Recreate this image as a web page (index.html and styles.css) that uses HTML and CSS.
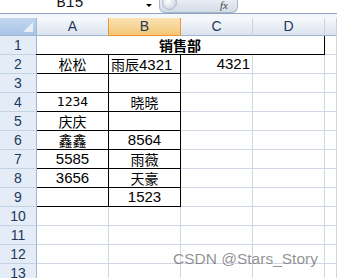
FILE: index.html
```html
<!DOCTYPE html>
<html>
<head>
<meta charset="utf-8">
<link rel="stylesheet" href="styles.css">
</head>
<body>
<div class="app">
  <div class="formula-bar">
    <div class="namebox">B15</div>
    <div class="dropdown"></div>
    <div class="pill">
      <span class="knob"></span>
      <span class="fx">fx</span>
    </div>
    <div class="formula-input"></div>
  </div>
  <div class="band"></div>
  <div class="sheet">
    <div class="corner"><span class="tri"></span></div>
    <div class="colh">A</div>
    <div class="colh sel">B</div>
    <div class="colh">C</div>
    <div class="colh">D</div>
    <div class="colh"></div>

    <div class="rowh">1</div>
    <div class="cell title bx">销售部</div>
    <div class="cell"></div>

    <div class="rowh">2</div>
    <div class="cell c bx">松松</div>
    <div class="cell l bx">雨辰<span class="num">4321</span></div>
    <div class="cell r num">4321</div>
    <div class="cell"></div>
    <div class="cell"></div>

    <div class="rowh">3</div>
    <div class="cell bx"></div>
    <div class="cell bx"></div>
    <div class="cell"></div>
    <div class="cell"></div>
    <div class="cell"></div>

    <div class="rowh">4</div>
    <div class="cell c bx song">1234</div>
    <div class="cell c bx">晓晓</div>
    <div class="cell"></div>
    <div class="cell"></div>
    <div class="cell"></div>

    <div class="rowh">5</div>
    <div class="cell c bx">庆庆</div>
    <div class="cell bx"></div>
    <div class="cell"></div>
    <div class="cell"></div>
    <div class="cell"></div>

    <div class="rowh">6</div>
    <div class="cell c bx">鑫鑫</div>
    <div class="cell c bx num">8564</div>
    <div class="cell"></div>
    <div class="cell"></div>
    <div class="cell"></div>

    <div class="rowh">7</div>
    <div class="cell c bx num">5585</div>
    <div class="cell c bx">雨薇</div>
    <div class="cell"></div>
    <div class="cell"></div>
    <div class="cell"></div>

    <div class="rowh">8</div>
    <div class="cell c bx num">3656</div>
    <div class="cell c bx">天豪</div>
    <div class="cell"></div>
    <div class="cell"></div>
    <div class="cell"></div>

    <div class="rowh">9</div>
    <div class="cell bx"></div>
    <div class="cell c bx num">1523</div>
    <div class="cell"></div>
    <div class="cell"></div>
    <div class="cell"></div>

    <div class="rowh">10</div>
    <div class="cell"></div><div class="cell"></div><div class="cell"></div><div class="cell"></div><div class="cell"></div>
    <div class="rowh">11</div>
    <div class="cell"></div><div class="cell"></div><div class="cell"></div><div class="cell"></div><div class="cell"></div>
    <div class="rowh">12</div>
    <div class="cell"></div><div class="cell"></div><div class="cell"></div><div class="cell"></div><div class="cell"></div>
    <div class="rowh">13</div>
    <div class="cell"></div><div class="cell"></div><div class="cell"></div><div class="cell"></div><div class="cell"></div>
  </div>
  <div class="watermark">CSDN @Stars_Story</div>
</div>
</body>
</html>
```
FILE: styles.css
```css
* { box-sizing: border-box; }
html, body {
  margin: 0;
  padding: 0;
  background: #ffffff;
}
body {
  width: 337px;
  height: 278px;
  overflow: hidden;
  font-family: "Noto Sans CJK SC", "Liberation Sans", sans-serif;
  color: #000;
}
.app {
  position: relative;
  width: 337px;
  height: 278px;
  overflow: hidden;
}
.formula-bar {
  display: flex;
  align-items: flex-start;
  height: 14px;
  border-bottom: 1px solid #8ea3bd;
  background: #fff;
}
.namebox {
  width: 140px;
  height: 13px;
  overflow: hidden;
  text-align: center;
  font-family: "Liberation Mono", monospace;
  font-size: 15px;
  line-height: 8px;
  color: #111;
}
.dropdown {
  width: 0;
  height: 0;
  margin: 4px 7px 0 6px;
  border-left: 3px solid transparent;
  border-right: 3px solid transparent;
  border-top: 3px solid #000;
}
.pill {
  position: relative;
  width: 79px;
  height: 13px;
  border: 1px solid #a7b6c8;
  border-top: none;
  border-radius: 0 0 6px 6px;
  background: linear-gradient(#e9eef4, #d2dbe6);
  display: flex;
  align-items: center;
  justify-content: flex-end;
  padding-right: 9px;
}
.knob {
  position: absolute;
  left: 2px;
  top: -5px;
  width: 15px;
  height: 15px;
  border-radius: 50%;
  background: radial-gradient(circle at 40% 40%, #ffffff 0%, #dfe5ec 50%, #b8c3d0 100%);
  border: 1px solid #b0bccb;
}
.fx {
  font-family: "Liberation Serif", serif;
  font-style: italic;
  font-size: 11px;
  line-height: 10px;
  color: #444;
  margin-top: -3px;
}
.formula-input { flex: 1; }
.band {
  height: 4px;
  background: #f4f7fb;
}
.sheet {
  display: grid;
  grid-template-columns: 37px 72px 72px 72px 72px 12px;
  grid-template-rows: 18px;
  grid-auto-rows: 19px;
}
.corner {
  position: relative;
  background: linear-gradient(#c4d6ee, #a9c3e6);
  border-right: 1px solid #9eb6ce;
  border-bottom: 1px solid #9eb6ce;
}
.tri {
  position: absolute;
  right: 3px;
  bottom: 3px;
  width: 0;
  height: 0;
  border-left: 10px solid transparent;
  border-bottom: 10px solid #e7eef8;
}
.colh {
  background: linear-gradient(#f7f9fc 0%, #e9eef5 50%, #dbe3ee 100%);
  border-right: 1px solid #c5d2e2;
  border-bottom: 1px solid #9eb6ce;
  font-family: "Liberation Sans", sans-serif;
  font-size: 14px;
  line-height: 17px;
  text-align: center;
  color: #1e395b;
}
.colh.sel {
  background: linear-gradient(#fbe3b5 0%, #f8d697 50%, #f3c675 100%);
  border-right: 1px solid #f29536;
  border-left: 1px solid #f29536;
  margin-left: -1px;
  border-bottom: 1px solid #f29536;
}
.rowh {
  background: #e4ecf7;
  border-right: 1px solid #9eb6ce;
  border-bottom: 1px solid #c5d2e2;
  font-family: "Liberation Sans", sans-serif;
  font-size: 14px;
  line-height: 18px;
  text-align: center;
  color: #1e395b;
}
.cell {
  border-right: 1px solid #d0d7e5;
  border-bottom: 1px solid #d0d7e5;
  font-size: 14px;
  line-height: 18px;
  white-space: nowrap;
  overflow: visible;
  padding: 0 2px;
}
.cell.bx {
  border-right-color: #000;
  border-bottom-color: #000;
}
.cell.c { text-align: center; }
.cell.l { text-align: left; }
.cell.r { text-align: right; }
.num {
  font-family: "Liberation Sans", sans-serif;
  font-size: 15px;
}
.song {
  font-family: "DejaVu Sans Mono", monospace;
  font-size: 13px;
}
.title {
  grid-column: 2 / span 4;
  text-align: center;
  font-weight: bold;
  margin-left: -1px;
}
.watermark {
  position: absolute;
  left: 173px;
  top: 250px;
  font-family: "Liberation Sans", sans-serif;
  font-size: 15.5px;
  color: rgba(110, 110, 110, 0.75);
  white-space: nowrap;
}
```
